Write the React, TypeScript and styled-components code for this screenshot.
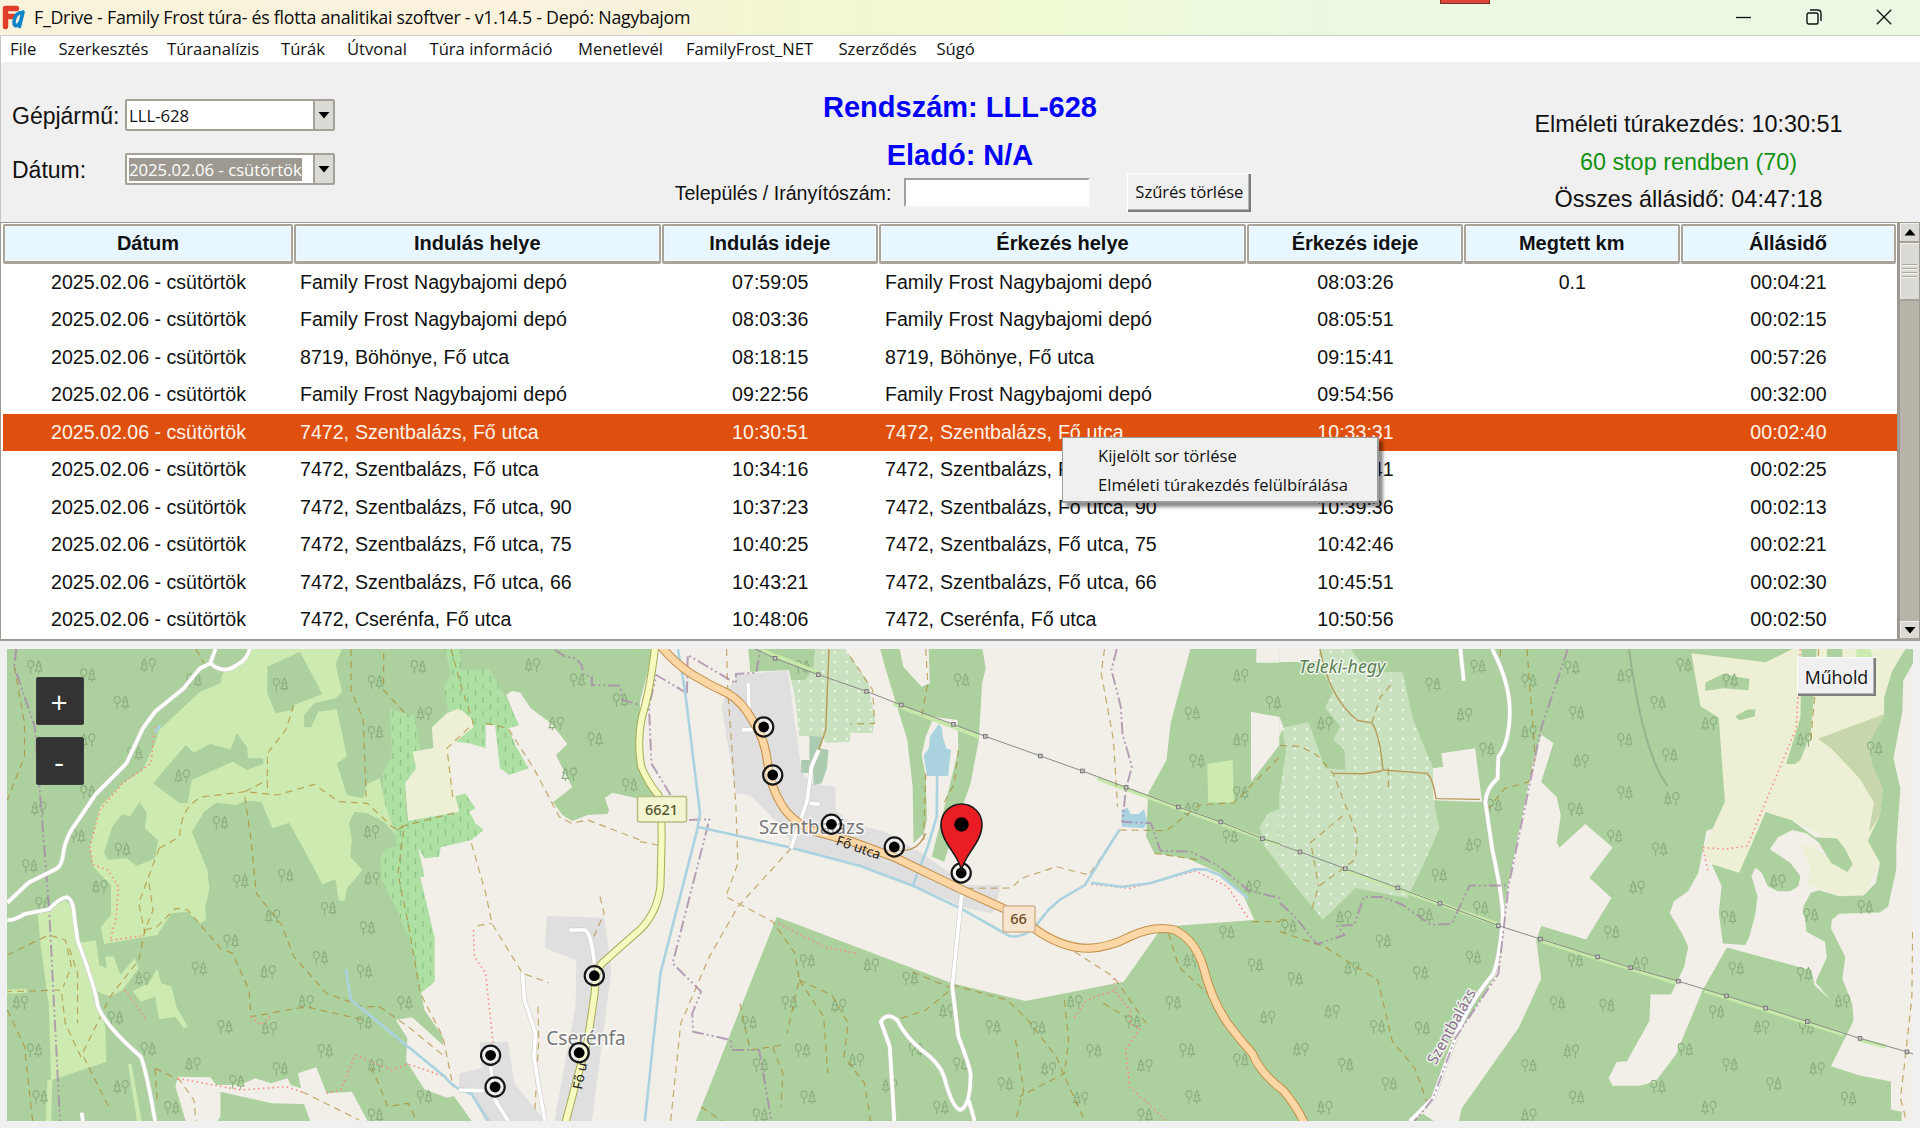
import React from "react";
import styled, { createGlobalStyle, css } from "styled-components";

const uiFont = `"Open Sans", "Noto Sans", sans-serif`;
const arial = `"Liberation Sans", Arial, sans-serif`;

const GlobalStyle = createGlobalStyle`
  *, *::before, *::after { box-sizing: border-box; }
  body { margin: 0; background: #f0f0f0; overflow: hidden; }
`;

/* ---------- window chrome ---------- */

const Window = styled.div`
  width: 1920px;
  height: 1128px;
  display: flex;
  flex-direction: column;
  background: #f0f0f0;
  color: #111;
  font-family: ${arial};
  overflow: hidden;
`;

const TitleBar = styled.header`
  position: relative;
  height: 36px;
  flex: none;
  display: flex;
  align-items: center;
  padding-left: 2px;
  background: linear-gradient(90deg, #f8f3da 0%, #faf2dd 25%, #f8f2dc 32%, #f4f6d2 40%, #effad5 55%, #ebf8e2 70%, #ebf8e3 100%);
  border-bottom: 1px solid #cdd0c8;
`;

const TitleText = styled.h1`
  flex: 1;
  margin: 0 0 0 8px;
  font: 400 17.8px/33px ${uiFont};
  letter-spacing: -0.25px;
  color: #0c0c0c;
  white-space: nowrap;
`;

const RecordingTab = styled.div`
  position: absolute;
  top: 0;
  left: 1440px;
  width: 50px;
  height: 4px;
  background: #d9473a;
  border: 1px solid #7c2c22;
  border-top: 0;
`;

const WindowButtons = styled.div`
  display: flex;
  gap: 54px;
  align-items: center;
  padding: 0 28px 2px 0;
  height: 34px;
`;

const MenuBar = styled.nav`
  height: 26px;
  flex: none;
  display: flex;
  align-items: center;
  background: #fff;
  border-left: 1px solid #c4c4c4;
  padding-left: 9px;
`;

const MenuItem = styled.span<{ $width: number }>`
  width: ${(p) => p.$width}px;
  font: 400 16.6px/26px ${uiFont};
  white-space: nowrap;
`;

/* ---------- filter panel ---------- */

const Panel = styled.section`
  height: 160px;
  flex: none;
  display: grid;
  grid-template-columns: 550px 820px 550px;
  border-left: 1px solid #c9c9c9;
`;

const Fields = styled.div`
  display: flex;
  flex-direction: column;
  gap: 22px;
  padding: 37px 0 0 11px;
`;

const Field = styled.label`
  display: grid;
  grid-template-columns: 113px 210px;
  align-items: center;
  height: 32px;
  white-space: nowrap;
`;

const FieldName = styled.span`
  font-size: 23px;
  padding-top: 2px;
`;

const Combo = styled.span`
  display: flex;
  height: 32px;
  border: 2px solid #a5a196;
  border-radius: 2px;
  background: #fff;
`;

const ComboValue = styled.span`
  flex: 1;
  display: flex;
  align-items: center;
  padding-left: 2px;
  font: 400 16.7px/23px ${uiFont};
`;

const Selected = styled.span`
  background: #9e9a91;
  color: #fff;
  width: 173px;
`;

const ComboButton = styled.span`
  width: 20px;
  display: grid;
  place-items: center;
  background: #dcdad5;
  border-left: 2px solid #a5a196;
`;

const Centre = styled.div`
  display: flex;
  flex-direction: column;
  align-items: center;
  padding-top: 28px;
`;

const Heading = styled.h2`
  margin: 0 2px 13.5px 0;
  font: 700 29px/34px ${arial};
  color: #0000fb;
  & + & { margin-bottom: 1px; }
`;

const SearchRow = styled.div`
  display: flex;
  align-items: center;
  height: 40px;
  margin-left: 4px;
`;

const SearchLabel = styled.label`
  font-size: 19.6px;
  padding-top: 2px;
`;

const SearchInput = styled.input`
  width: 186px;
  height: 29px;
  margin: 0 37px 0 13px;
  background: #fff;
  border: 2px solid;
  border-color: #a0a0a0 #fafafa #fafafa #a0a0a0;
  padding: 0;
`;

const RaisedButton = styled.button`
  height: 39px;
  border: 0;
  padding: 0 8px 1px;
  background: #f0f0f0;
  box-shadow: inset 1px 1px 0 #fff, inset -2px -2px 0 #7c7c7c, inset -3px -3px 0 #b4b4b4;
  font: 400 16.7px/22px ${uiFont};
  letter-spacing: -0.1px;
  color: #111;
  white-space: nowrap;
`;

const Summary = styled.div`
  display: flex;
  flex-direction: column;
  align-items: center;
  padding: 44px 0 0 85px;
`;

const SummaryLine = styled.div<{ $ok?: boolean }>`
  font-size: 23.4px;
  line-height: 37.5px;
  color: ${(p) => (p.$ok ? "#129312" : "#111")};
`;

/* ---------- trip table ---------- */

const TableFrame = styled.section`
  position: relative;
  height: 419px;
  flex: none;
  display: grid;
  grid-template-columns: 1899px 21px;
`;

const Table = styled.div`
  display: flex;
  flex-direction: column;
  background: #fff;
  border: solid #9e9a91;
  border-width: 1px 2px 2px 1px;
  padding: 1px 0 0 2px;
`;

const columns = css`
  display: grid;
  grid-template-columns: 291px 367.5px 217.5px 368px 217px 216.5px 216px;
`;

const HeaderRow = styled.div`
  ${columns}
  height: 39.5px;
`;

const HeaderCell = styled.div`
  display: grid;
  place-items: center;
  margin-right: 1px;
  padding-top: 1px;
  background: #e8f6ff;
  border: 2px solid #a8a49a;
  border-width: 2px 2px 3px;
  border-radius: 2px;
  box-shadow: inset 0 0 0 1px #f3f8fb;
  font-weight: 700;
  font-size: 20px;
`;

const Row = styled.div<{ $active?: boolean }>`
  ${columns}
  height: 37.5px;
  align-items: center;
  background: ${(p) => (p.$active ? "#df500f" : "#fff")};
  color: ${(p) => (p.$active ? "#fff3ea" : "#111")};
  font-size: 19.6px;
`;

const Cell = styled.div<{ $left?: boolean }>`
  text-align: ${(p) => (p.$left ? "left" : "center")};
  padding-left: ${(p) => (p.$left ? 6 : 0)}px;
  word-spacing: ${(p) => (p.$left ? 0.4 : 0)}px;
  white-space: nowrap;
`;

const ScrollBar = styled.div`
  display: flex;
  flex-direction: column;
  background: #b8b4a9;
  border: solid #9e9a91;
  border-width: 1px;
`;

const ScrollPart = styled.div<{ $height: number; $push?: boolean }>`
  height: ${(p) => p.$height}px;
  margin-top: ${(p) => (p.$push ? "auto" : 0)};
  display: flex;
  flex-direction: column;
  gap: 2px;
  align-items: center;
  justify-content: center;
  background: #dcdad5;
  border-bottom: 2px solid #a5a196;
  box-shadow: inset 1px 1px 0 #f1f0ed;
`;

const Grip = styled.i`
  width: 15px;
  height: 2px;
  background: #aeaaa0;
  border-bottom: 1px solid #f4f3f0;
`;

const ContextMenu = styled.div`
  position: absolute;
  left: 1062px;
  top: 215px;
  width: 317px;
  height: 66px;
  padding: 4px 0 0 35px;
  background: #f0f0f0;
  border: 1px solid #9c9c9c;
  border-right-width: 2px;
  border-bottom-width: 2px;
  box-shadow: 4px 4px 3px rgba(0, 0, 0, 0.45);
`;

const ContextItem = styled.div`
  font: 400 16.6px/28.5px ${uiFont};
  white-space: nowrap;
`;

/* ---------- map ---------- */

const MapFrame = styled.section`
  position: relative;
  width: 1906px;
  height: 472px;
  margin: 8px 0 0 7px;
`;

const MapSvg = styled.svg`
  display: block;
`;

const ZoomStack = styled.div`
  position: absolute;
  left: 29px;
  top: 28px;
  display: flex;
  flex-direction: column;
  gap: 12px;
`;

const ZoomButton = styled.button`
  width: 48px;
  height: 48px;
  border: 1px solid #3d3d3d;
  border-radius: 2px;
  padding: 0 2px 0 0;
  background: #333;
  color: #fff;
  font: 400 30px/45px ${uiFont};
`;

const SatelliteButton = styled(RaisedButton)`
  position: absolute;
  left: 1790px;
  top: 8px;
  width: 79px;
  padding: 0;
  font-size: 17.8px;
`;

type AreaKind = "forest" | "land" | "meadow" | "heath" | "farm" | "homes" | "orchard" | "yard" | "water" | "scrub";
type LineKind = "track" | "path" | "border" | "stream" | "lane" | "dirt" | "ridge" | "power" | "clearing";

const areaFill: Record<AreaKind, string> = {
  forest: "#add19e",
  land: "#f2efe9",
  meadow: "#cdebb0",
  heath: "url(#heath)",
  farm: "#eef0d5",
  homes: "#e0dfdf",
  orchard: "url(#orchard)",
  yard: "#aacbaf",
  water: "#aad3df",
  scrub: "#c8d7ab",
};

const lineStyle: Record<LineKind, string> = {
  track: "stroke: #ac8327; stroke-width: 1.2; stroke-dasharray: 7 5; opacity: .65;",
  path: "stroke: #f58e80; stroke-width: 1.6; stroke-dasharray: 1.6 3.2;",
  border: "stroke: #a98bab; stroke-width: 2; stroke-dasharray: 12 3 2 3 2 3; opacity: .8;",
  stream: "stroke: #aad3df; stroke-width: 2.6;",
  lane: "stroke: #fff; stroke-width: 3.6;",
  dirt: "stroke: #b89a58; stroke-width: 1.4;",
  ridge: "stroke: #94b58f; stroke-width: 2;",
  power: "stroke: #8b8b8b; stroke-width: 1;",
  clearing: "stroke: #c6e8a8; stroke-width: 4;",
};

const Area = styled.polygon<{ $kind: AreaKind }>`
  fill: ${(p) => areaFill[p.$kind]};
`;

const Line = styled.path<{ $kind: LineKind }>`
  fill: none;
  stroke-linejoin: round;
  vector-effect: non-scaling-stroke;
  ${(p) => lineStyle[p.$kind]}
`;

const Road = styled.path<{ $color: string; $width: number }>`
  fill: none;
  stroke: ${(p) => p.$color};
  stroke-width: ${(p) => p.$width};
  stroke-linejoin: round;
  vector-effect: non-scaling-stroke;
`;

const MapLabel = styled.text<{ $size: number; $color: string; $italic?: boolean; $weight?: number }>`
  font-family: "Noto Sans", sans-serif;
  font-size: ${(p) => p.$size}px;
  font-style: ${(p) => (p.$italic ? "italic" : "normal")};
  font-weight: ${(p) => p.$weight ?? 400};
  fill: ${(p) => p.$color};
  stroke: rgba(255, 255, 255, 0.75);
  stroke-width: 3px;
  paint-order: stroke;
  stroke-linejoin: round;
  text-anchor: middle;
`;

const ShieldText = styled.text`
  font: 500 14.5px "Noto Sans", sans-serif;
  text-anchor: middle;
`;

interface Tile {
  x: number;
  y: number;
  sx: number;
  sy: number;
  areas: [AreaKind, string][];
  lines: [LineKind, string][];
  trees: string;
}

const SX = 1 / 2.45;
const SY = 1 / 3;
const SYE = 1 / 2.97;

const west: Tile = {
  x: 0, y: 640, sx: SX, sy: SY,
  areas: [
    ["forest", "0,0 1568,0 1568,1464 0,1464"],
    ["land", "1240,165 1255,152 1275,158 1300,205 1350,250 1390,312 1362,345 1402,442 1355,487 1378,525 1402,543 1440,525 1488,522 1492,510 1482,475 1500,458 1570,478 1570,1464 1168,1464 1112,1368 1095,1373 1040,1348 995,1262 998,1195 970,1140 1010,1132 1085,1215 1085,1190 1040,1110 1032,1060 1000,700 1000,540 993,430 1012,335 1090,318 1190,250 1215,255 1270,255"],
    ["heath", "1088,20 1128,20 1130,90 1200,88 1235,165 1272,255 1245,265 1265,320 1295,385 1248,405 1225,385 1213,255 1190,255 1190,325 1150,310 1115,305 1160,262 1155,235 1130,210 1098,215 1088,140 1105,100"],
    ["heath", "955,207 1015,228 1030,330 1012,335 1020,385 993,430 995,540 1125,515 1112,470 1140,460 1165,505 1150,515 1165,550 1185,570 1155,600 1080,622 1075,650 1040,655 1025,625 1040,710 1030,712 1065,895 1065,1025 1032,1058 1015,940 975,815 935,720 932,650 950,625 972,620 970,570 940,490 938,400 960,350"],
    ["farm", "1058,262 1095,220 1120,207 1130,210 1155,235 1160,262 1100,322 1110,440 1125,515 1000,542 993,430 1020,390 1012,335 1062,325"],
    ["meadow", "612,20 840,20 822,72 838,155 822,175 770,190 745,225 745,262 762,262 780,215 825,208 850,350 825,370 850,465 890,475 900,432 930,415 945,500 972,585 940,545 900,520 868,515 855,550 862,600 858,650 888,690 850,745 845,782 830,782 822,718 790,733 750,640 708,548 668,565 640,485 600,482 580,495 530,488 500,515 470,575 508,690 513,750 503,800 505,840 490,850 460,815 420,820 385,885 255,912 247,860 272,825 272,735 228,680 220,620 245,500 300,430 350,390 380,310 390,270 490,155 540,130 545,100 600,60"],
    ["forest", "655,80 735,35 790,162 720,195 718,210 675,220 655,160"],
    ["forest", "375,430 455,315 475,338 515,312 565,328 580,280 605,320 608,355 645,355 645,372 605,390 570,365 470,420 460,490 440,490"],
    ["forest", "255,640 275,560 300,522 318,530 342,485 360,520 355,565 387,600 380,655 335,678 310,655 265,660"],
    ["meadow", "92,822 120,805 160,780 178,800 190,900 215,1000 240,1100 258,1160 260,1265 128,1320 125,1464 112,1464 116,1322 125,1318 120,1100 100,920"],
    ["meadow", "190,908 235,902 243,975 262,985 258,950 278,948 295,1005 330,955 340,985 300,1050 270,1070 240,1055 215,1010"],
    ["meadow", "325,1053 365,1030 385,985 395,1030 420,1040 432,1100 460,1160 450,1165 430,1130 390,1138 380,1070 345,1085"],
    ["meadow", "314,1272 322,1272 350,1464 338,1464"],
    ["meadow", "0,1050 66,1046 66,1058 0,1062"],
    ["land", "435,1310 515,1312 530,1335 590,1335 625,1315 665,1330 705,1315 712,1335 738,1345 730,1300 775,1282 800,1360 862,1355 910,1464 766,1464 745,1392 665,1390 540,1355 540,1430 520,1464 460,1464 430,1340"],
    ["homes", "1340,828 1480,833 1498,990 1448,1464 1355,1464 1410,1100 1412,960 1335,925"],
    ["homes", "1175,1207 1245,1205 1260,1330 1335,1443 1197,1464 1155,1362 1125,1345 1125,1300 1180,1285"],
  ],
  lines: [
    ["track", "M35,80 L60,250 60,350 18,480 M860,27 L860,150 890,240 897,470 M940,40 L940,150 1000,230 M720,195 L700,270 655,340 655,465 M390,625 L440,590 Q445,490 500,470 L600,455 680,465 770,433 830,485 900,490 965,565 1125,515 M600,455 L655,420"],
    ["track", "M600,470 L615,600 628,760 690,855 720,950 800,1060 890,1100 930,1100 1000,1160 1090,1250 M390,625 L355,740 340,790 355,880 M355,870 L385,860 430,805 460,810 540,925 570,940 610,1050 615,1130 750,1100 890,1140"],
    ["track", "M365,730 L375,810 355,870 340,960 270,1070 198,1250 160,1150 150,1050 18,1055 M18,945 L120,885 160,900 175,980 155,1040 M170,925 L190,1000 190,1150 M480,27 L500,70"],
    ["track", "M972,570 L990,560 975,700 1000,850 1030,1060 1085,1190 1110,1340 M1105,27 L1130,140 1160,250 1095,325 1110,480 M1190,250 L1245,265 1310,390 1370,530 1400,550 1440,540 1568,600 M1155,610 L1190,760 1205,850 1280,1000 1345,1028 M1170,857 L1205,850"],
    ["track", "M1318,1100 L1320,1200 1310,1420 M1470,770 L1480,820 1455,890 M380,1285 L440,1320 475,1380 480,1443 M740,1355 L880,1440 M18,1110 L60,1220 80,1443 M380,1285 L385,1380 M910,1280 L950,1400 1000,1390 1020,1440 M205,1250 L270,1410"],
    ["path", "M380,260 L370,370 300,430 245,510 220,620 228,675 265,690 290,740 285,830 270,902 345,888 M1160,870 L1162,950 1190,1000 1208,1210 M435,1315 L590,1350 700,1340 745,1358 M800,1360 L835,1350 870,1245 960,1290 1000,1272 1090,1310 M305,1050 L360,1140 M615,1130 L640,1155 665,1125"],
    ["border", "M40,27 L35,80 85,260 120,800 147,1443 M1360,30 L1385,50 1410,55 1425,75 1430,105 1450,110 1450,135 1520,137 1525,180 1568,195"],
    ["stream", "M847,988 L860,1080 1090,1310 Q1110,1345 1155,1362 L1197,1443 M392,255 L380,278"],
    ["lane", "M18,788 L70,728 140,685 Q152,675 155,640 Q160,600 175,570 L235,462 310,370 350,265 380,215 450,145 490,85 515,70 528,27 M515,70 Q550,105 580,75 Q605,60 612,27"],
    ["lane", "M18,840 Q35,842 60,822 L120,808 Q150,770 165,772 Q180,780 182,830 L190,900 Q235,1050 240,1100 Q260,1160 345,1250 Q360,1300 380,1443 M200,1418 L204,1450"],
    ["lane", "M1280,1000 L1285,1080 1312,1180 1308,1250 1320,1340 1335,1443 M1125,1350 L1185,1352 M1202,1280 L1213,1380 1245,1443 M1395,870 L1435,870 Q1450,890 1456,970"],
  ],
  trees: "85,80 215,105 363,75 475,120 297,187 215,300 330,340 215,455 95,505 190,588 73,678 245,740 105,790 687,133 447,408 300,628 540,548 910,575 590,723 700,706 668,828 805,805 900,863 912,715 566,903 785,953 657,996 488,985 893,994 750,1085 992,1088 551,1160 660,1165 797,1232 893,1148 350,1015 283,1133 363,1227 473,1272 687,1286 580,1325 920,1276 920,1425 1040,1370 297,1340 98,1370 84,1230 50,1087 421,1403 1025,80 1305,75 920,125 1415,120 1040,220 920,277 1520,180 1363,250 1458,297 1543,435 1395,402",
};

const centre: Tile = {
  x: 640, y: 640, sx: SX, sy: SY,
  areas: [
    ["land", "0,0 1568,0 1568,1464 0,1464"],
    ["forest", "-1,20 30,20 18,100 -1,190"],
    ["forest", "-1,385 12,410 48,468 -1,470"],
    ["homes", "215,150 240,105 362,90 395,390 415,430 478,440 480,510 520,550 600,575 690,640 760,700 800,735 885,735 865,820 800,805 670,735 540,680 380,625 345,560 270,465 235,460 200,200"],
    ["forest", "265,20 430,20 425,90 405,120 370,120 365,90 270,95"],
    ["orchard", "430,20 500,20 560,130 575,240 570,280 515,278 515,305 455,308 445,290 390,288 380,170 370,120 405,120 425,90"],
    ["yard", "415,288 448,290 440,325 462,330 458,385 445,430 425,435 425,400 395,398 395,360 415,360"],
    ["forest", "587,20 635,20 645,80 690,140 710,130 707,20 838,20 847,85 838,130 830,300 810,430 770,570 745,665 715,650 750,480 780,330 778,240 720,230 700,290 690,345 700,410 703,540 695,580 670,610 668,440 655,300 600,80"],
    ["water", "732,252 740,265 742,290 750,325 762,330 755,408 703,408 695,345 708,325 710,290"],
    ["forest", "1350,20 1570,20 1570,1464 130,1464 335,830 765,1030 945,1083 1185,1025 1280,860 1505,840 1480,770 1420,700 1340,655 1260,640 1240,590 1245,460 1290,360 1300,250"],
    ["land", "1510,20 1570,20 1570,68 1510,68"],
    ["land", "1497,215 1570,232 1570,310 1497,425"],
    ["meadow", "1390,372 1452,360 1455,488 1392,487"],
    ["orchard", "1570,505 1540,520 1518,560 1530,620 1570,680"],
    ["water", "1180,510 1195,503 1202,522 1222,522 1235,508 1243,545 1235,565 1180,560"],
  ],
  lines: [
    ["clearing", "M290,27 L437,98 M620,192 L830,290 M1120,415 L1568,615"],
    ["track", "M212,27 L215,150 235,500 240,670 210,770 325,845 380,940 390,1020 360,1180 M370,625 L240,800 170,950 100,1150 75,1443 M700,27 L705,130 690,230 M700,400 L695,600 M780,330 L770,430 740,500 M515,50 L570,150 575,250 515,252"],
    ["track", "M800,745 L910,744 935,715 1020,680 1100,705 1175,570 M1138,27 L1130,100 1160,300 1170,500 M1175,570 L1290,572 1370,495 1455,488 1568,350 M640,1135 L700,1110 765,1045 665,995 M765,1035 L900,1080 950,1140 1020,1250 1040,1310 1090,1443 M1260,640 L1370,660 M1500,845 L1568,845"],
    ["track", "M390,1020 L470,1065 510,1150 500,1250 550,1330 565,1443 M390,1020 L450,1130 460,1300 M245,1090 L270,1230 350,1215 M325,1220 L350,1300 345,1400 M1065,935 L1160,1010 1240,1150 M1295,880 L1320,980 1390,1060 M1040,1080 L1050,1200 1040,1300 930,1370 M920,1200 L940,1350 920,1443 M1135,1090 L1190,1130 M150,1400 L200,1443 M0,605 L45,615"],
    ["path", "M340,850 L450,920 530,940 M1105,733 L1200,745 1360,693 1440,740 1490,835 M1160,1015 L1165,1050 1095,1080 1060,1140 M1165,1055 L1200,1110 1200,1150 1225,1165 1190,1230 1200,1340 1290,1443"],
    ["border", "M115,160 L40,105 22,200 28,370 75,465 M115,160 L117,45 235,130 235,102 285,98 295,27 M120,540 L170,538 80,970 150,1055 128,1120 130,1175 222,1200 225,1230 292,1230 322,1443 M1168,27 L1155,90 1178,200 1182,280 1205,380 1190,450 1182,545 1252,550 1275,632 1350,635 1420,680 1490,750 1568,775"],
    ["stream", "M93,27 L110,150 147,520 140,570 50,1000 12,1443 M140,560 L360,620 540,678 670,738 790,808 905,888 Q935,895 965,865 L1000,810 1030,778 1090,735 1175,568 M728,408 L727,530 705,620 668,738 M1105,728 L1180,740 1250,730 1360,688 1385,688 1420,705 1490,775"],
    ["dirt", "M463,27 L458,180 455,270 438,330 M630,630 Q680,640 700,580"],
    ["lane", "M265,130 L268,225 300,260 M438,330 L420,380 410,480 385,570 370,625 M788,765 L765,1040 780,1190 Q812,1290 810,1310 Q808,1400 785,1410 Q765,1405 745,1310 Q735,1270 690,1230 Q650,1190 630,1140 Q605,1115 590,1145 L612,1220 623,1443 M805,1380 L820,1443 M250,270 L280,268 M415,490 L440,492"],
    ["power", "M270,20 L331,55 437,104 555,154 640,195 768,253 846,289 981,348 1084,393 1191,442 1319,501 1423,546 1525,596 1568,612"],
  ],
  trees: "398,80 788,120 1472,107 1552,188 1353,220 1472,300 1365,362 1472,458 1352,507 1446,590 410,962 567,975 662,1015 366,1088 487,1097 267,1147 398,1230 530,1260 295,1275 412,1371 612,1337 737,1402 295,1425 752,1113 865,1160 975,1163 1065,1085 786,1272 895,1332 1001,1286 1112,1232 1208,1145 1237,1277 1340,1230 1307,1088 1350,962 1438,877 1508,975 1538,1132 1472,1260 1355,1370 1080,1375 1237,1425 677,1228 1502,740",
};

const east: Tile = {
  x: 1280, y: 600, sx: SX, sy: SYE,
  areas: [
    ["forest", "-2,100 1570,100 1570,1568 -2,1568"],
    ["land", "-2,140 95,140 98,182 -2,185"],
    ["land", "-2,345 8,375 -2,410"],
    ["orchard", "95,140 170,140 215,215 300,213 325,350 375,500 378,600 390,680 350,790 312,885 185,855 105,950 -2,790 -2,580 15,450 5,380 70,362 110,500 160,505 158,445 130,415 148,375 110,320 130,275 100,200"],
    ["land", "395,455 478,440 495,600 375,595 375,500 400,495"],
    ["land", "640,400 670,425 640,540 678,585 688,640 678,720 685,735 748,665 815,735 758,825 812,885 750,1008 640,968 628,1010 640,1125 585,1270 445,1510 435,1568 400,1568 350,1525 300,1568 375,1480 435,1290 490,1190 530,1110 545,950 560,840 600,600 620,480"],
    ["land", "1025,810 1045,685 1190,630 1450,250 1500,140 1570,140 1570,1568 1523,1568 1523,1520 1497,1513 1497,1430 1420,1412 1350,1385 1405,1250 1310,1145 1302,1100 1095,1032 1035,1160 970,1350 920,1430 880,1443 815,1443 805,1420 825,1372 850,1370 905,1250 908,1172 958,1172 990,1090 1000,1030 985,990 955,930 965,895 1000,865"],
    ["farm", "1008,158 1190,185 1265,140 1535,140 1500,340 1470,700 1470,780 1430,880 1370,880 1290,845 1300,800 1275,720 1310,735 1340,760 1330,700 1280,670 1190,630 1125,810 1058,785 1035,745 1090,600 1075,350 1030,315"],
    ["scrub", "1483,338 1445,430 1450,490 1477,560 1470,640 1443,690 1455,600 1420,530 1350,440 1318,412"],
    ["forest", "1535,140 1570,140 1550,190 1527,240 1525,330 1503,470 1520,560 1510,730 1510,800 1490,910 1470,928 1370,932 1352,950 1350,975 1385,1060 1378,1125 1402,1200 1405,1245 1385,1300 1365,1270 1350,1190 1312,1135 1340,1060 1335,1015 1290,985 1282,910 1300,870 1320,862 1370,880 1430,878 1460,840 1470,780 1440,715 1450,690 1470,640 1477,560 1450,490 1445,420 1480,345 1480,290 1500,210"],
    ["forest", "1190,630 1255,655 1310,705 1365,708 1385,740 1403,785 1390,808 1350,780 1320,720 1290,693 1255,683 1220,705 1200,740 1250,780 1275,820 1270,850 1250,865 1220,865 1195,850 1180,810 1165,795 1155,820 1170,880 1165,930 1150,1000 1140,1025 1085,1020 1075,930 1082,850 1058,785 1125,810"],
    ["forest", "1278,140 1315,140 1308,290 1300,400 1275,475 1262,487 1240,487 1275,350"],
    ["forest", "1340,140 1378,140 1378,175 1340,175"],
    ["meadow", "1412,140 1445,140 1452,170 1412,170"],
    ["forest", "1042,245 1085,220 1150,235 1148,268 1085,262 1042,270"],
    ["forest", "1115,345 1145,325 1165,325 1163,345 1125,358"],
  ],
  lines: [
    ["clearing", "M160,803 L545,968 M640,1012 L970,1137 M1040,1160 L1380,1290 M1420,1306 L1485,1326"],
    ["track", "M0,432 L50,435 90,460 130,515 190,700 185,770 95,850 75,930 M155,640 L75,720 95,850 M225,365 L245,290 280,240 M605,146 L620,380 625,470 610,540 550,560 510,620 M540,146 L540,190 M0,985 L110,1030 240,1130 275,1310 330,1390 360,1490"],
    ["track", "M1320,146 L1310,290 1300,420 M1550,985 L1548,1180 1530,1380 1520,1480 1535,1548 M265,500 L266,560 M0,950 L20,950"],
    ["path", "M1275,146 L1265,380 1145,730 1090,740 1035,735 1050,810"],
    ["ridge", "M855,146 Q890,460 950,552"],
    ["dirt", "M98,146 Q120,290 190,358 L225,365 Q245,400 252,505 L360,515 Q375,530 382,590 L490,592 M250,508 L205,516 130,515"],
    ["lane", "M520,146 Q565,250 563,340 Q560,430 535,465 L533,530 Q505,560 503,600 L520,740 Q545,880 546,940 Q540,1050 523,1110 Q460,1200 430,1300 L375,1480 318,1548 M442,146 L450,240"],
    ["border", "M705,146 L640,380 560,850 535,1110 430,1300 375,1480 330,1548 M0,900 L40,945 90,1022 158,995 140,968 182,965 205,882 250,882 300,905 370,965 420,962 465,848 558,848"],
    ["power", "M0,727 L49,748 160,798 289,855 392,901 535,967 638,1007 778,1060 859,1092 976,1132 1094,1176 1190,1212 1292,1252 1421,1302 1536,1342 1560,1352"],
  ],
  trees: "485,197 375,250 452,340 507,443 610,240 610,392 715,200 727,335 845,225 845,415 926,305 738,478 955,460 845,572 960,590 724,621 820,702 474,728 390,817 930,740 875,853 492,914 356,935 157,942 253,1013 474,1062 176,1094 37,1125 345,1107 128,1222 239,1267 349,1272 51,1335 161,1380 268,1437 110,1507 813,987 724,1071 883,1080 680,1197 801,1205 714,1340 610,1383 727,1477 610,1530 1118,1094 1070,1223 1180,1268 1290,1270 1103,1380 1316,1392 1210,1437 1393,1480 1051,1507 926,1445 993,1335 1378,1192 1285,1110 1099,942 1220,835 1300,935 1434,911 1052,367 1103,238 990,193 1285,415 1457,440 22,970 110,367 525,610",
};

const tiles = [west, centre, east];

const pylons: [Tile, string][] = [
  [centre, "331,55 437,104 555,154 640,195 768,253 846,289 981,348 1084,393 1191,442 1319,501 1423,546 1525,596"],
  [east, "49,748 160,798 289,855 392,901 535,967 638,1007 778,1060 859,1092 976,1132 1094,1176 1190,1212 1292,1252 1421,1302 1536,1342"],
];

const yellowRoad =
  "M37,20 Q25,150 5,230 Q-8,300 3,380 Q20,430 45,465 Q53,500 53,600 L50,740 Q40,830 -10,880 L-93,970 Q-110,990 -111,1060 L-128,1200 -153,1310 -183,1450";
const orangeRoad =
  "M52,20 Q90,75 130,105 T215,160 Q250,185 275,240 Q305,290 313,370 Q320,440 345,490 Q370,545 430,575 L520,605 620,650 790,750 890,805 960,860 Q1030,925 1100,925 Q1150,922 1200,890 Q1260,855 1310,870 Q1360,900 1380,980 Q1400,1080 1440,1150 Q1470,1200 1500,1240 Q1520,1300 1575,1350 Q1610,1400 1632,1460";

const stops: [number, number][] = [
  [763.7, 727], [772.7, 775], [831.4, 824.3], [894.3, 847], [961.2, 873],
  [594.3, 975.7], [579.2, 1052.7], [490.6, 1055.3], [495.1, 1087],
];

const project = (tile: Tile, list: string) =>
  list.split(" ").map((pair) => {
    const [x, y] = pair.split(",").map(Number);
    return [tile.x + x * tile.sx, tile.y + y * tile.sy];
  });

const transformOf = (t: Tile) => `translate(${t.x} ${t.y}) scale(${t.sx} ${t.sy})`;

function TourMap() {
  return (
    <MapSvg width="1906" height="472" viewBox="7 649 1906 472">
      <defs>
        <pattern id="heath" width="15" height="14" patternUnits="userSpaceOnUse" patternTransform="scale(2.45 3)">
          <rect width="15" height="14" fill="#aedfa3" />
          <path d="M3 1v6M10.5 8v6" stroke="#8cc587" strokeWidth="1.2" />
        </pattern>
        <pattern id="orchard" width="12" height="9.6" patternUnits="userSpaceOnUse" patternTransform="scale(2.45 3)">
          <rect width="12" height="9.6" fill="#c9e1bf" />
          <circle cx="3" cy="3" r="1.2" fill="#eef6ea" />
        </pattern>
        <g id="trees" fill="none" stroke="#8db081" strokeWidth="1.2">
          <ellipse cx="-4" cy="-2.5" rx="3" ry="3.6" />
          <path d="M-4 1.2V7M4 4.5V7M4-6L1.6-1H3L.8 4.3H7.2L5-1H6.4Z" />
        </g>
        <g id="treesFlipped"><use href="#trees" transform="scale(-1 1)" /></g>
      </defs>
      {tiles.map((t) => (
        <g key={t.x} transform={transformOf(t)}>
          {t.areas.map(([kind, points], i) => <Area key={i} $kind={kind} points={points} />)}
        </g>
      ))}
      {tiles.map((t) =>
        project(t, t.trees).map(([x, y], i) => (
          <use key={`${t.x}-${i}`} href={i % 3 === 2 ? "#treesFlipped" : "#trees"} x={x} y={y} />
        ))
      )}
      {tiles.map((t) => (
        <g key={t.x} transform={transformOf(t)}>
          {t.lines.map(([kind, d], i) => (
            <React.Fragment key={i}>
              {kind === "lane" && <Road $color="#cfcdc8" $width={4.8} d={d} />}
              <Line $kind={kind} d={d} />
            </React.Fragment>
          ))}
        </g>
      ))}
      <g transform={transformOf(centre)}>
        <Road $color="#a5ab57" $width={8} d={yellowRoad} />
        <Road $color="#f7fabf" $width={6} d={yellowRoad} />
        <Road $color="#c18f4a" $width={9} d={orangeRoad} />
        <Road $color="#fcd6a4" $width={7} d={orangeRoad} />
      </g>
      {pylons.map(([t, list]) =>
        project(t, list).map(([x, y], i) => (
          <rect key={`${t.x}-${i}`} x={x - 1.8} y={y - 1.8} width="3.6" height="3.6" fill="#c9c9c4" stroke="#777" strokeWidth="1" />
        ))
      )}

      <rect x="637.5" y="796.5" width="49" height="25.5" rx="2" fill="#f3f5d0" stroke="#b9bd84" strokeWidth="1.5" />
      <ShieldText x="661.5" y="814.5" fill="#53562c">6621</ShieldText>
      <rect x="1003" y="906" width="32" height="26" rx="2" fill="#f8e5cf" stroke="#d3b48f" strokeWidth="1.5" />
      <ShieldText x="1018.5" y="924" fill="#6b4e2a">66</ShieldText>

      <MapLabel $size={19.2} $color="#777" x="811.5" y="833.5">Szentbalázs</MapLabel>
      <MapLabel $size={19.2} $color="#777" x="586" y="1044.5">Cserénfa</MapLabel>
      <MapLabel $size={17.8} $color="#5c8253" $italic x="1342" y="672.5">Teleki-hegy</MapLabel>
      <MapLabel $size={15.2} $color="#8d6b90" transform="translate(1456 1029) rotate(-61)">Szentbalázs</MapLabel>
      <text transform="translate(857 852) rotate(19)" textAnchor="middle" fontFamily="Noto Sans, sans-serif" fontSize="13.5" fill="#222">Fő utca</text>
      <text transform="translate(582 1090) rotate(-79)" fontFamily="Noto Sans, sans-serif" fontSize="13.5" fill="#222">Fő u</text>

      {stops.map(([x, y]) => (
        <g key={`${x}`}>
          <circle cx={x} cy={y} r="9.6" fill="rgba(255,255,255,.4)" stroke="#161616" strokeWidth="2.2" />
          <circle cx={x} cy={y} r="5.4" fill="#000" />
        </g>
      ))}
      <path
        d="M961.5 871C960 856 941 843 941 824.5A20.5 20.5 0 0 1 982 824.5C982 843 963 856 961.5 871Z"
        fill="#ea1c24" stroke="#1a1a1a" strokeWidth="1.6"
      />
      <circle cx="961.5" cy="824.5" r="7.2" fill="#000" />
    </MapSvg>
  );
}

/* ---------- data ---------- */

const menu: [string, number][] = [
  ["File", 48.5], ["Szerkesztés", 108.5], ["Túraanalízis", 114], ["Túrák", 66], ["Útvonal", 82.5],
  ["Túra információ", 148.5], ["Menetlevél", 108], ["FamilyFrost_NET", 152.5], ["Szerződés", 98], ["Súgó", 60],
];

const headers = ["Dátum", "Indulás helye", "Indulás ideje", "Érkezés helye", "Érkezés ideje", "Megtett km", "Állásidő"];

const depot = "Family Frost Nagybajomi depó";
const street = "7472, Szentbalázs, Fő utca";
const trips: [string, string, string, string, string][] = [
  [depot, "07:59:05", "08:03:26", "0.1", "00:04:21"],
  [depot, "08:03:36", "08:05:51", "", "00:02:15"],
  ["8719, Böhönye, Fő utca", "08:18:15", "09:15:41", "", "00:57:26"],
  [depot, "09:22:56", "09:54:56", "", "00:32:00"],
  [street, "10:30:51", "10:33:31", "", "00:02:40"],
  [street, "10:34:16", "10:36:41", "", "00:02:25"],
  [`${street}, 90`, "10:37:23", "10:39:36", "", "00:02:13"],
  [`${street}, 75`, "10:40:25", "10:42:46", "", "00:02:21"],
  [`${street}, 66`, "10:43:21", "10:45:51", "", "00:02:30"],
  ["7472, Cserénfa, Fő utca", "10:48:06", "10:50:56", "", "00:02:50"],
];

const Caret = ({ up }: { up?: boolean }) => (
  <svg width="12" height="8" viewBox="0 0 12 8">
    <path d={up ? "M6 1L11.5 7.5H.5Z" : "M6 7.5L11.5 1H.5Z"} fill="#000" />
  </svg>
);

export default function App() {
  return (
    <Window>
      <GlobalStyle />
      <TitleBar>
        <svg width="24" height="25" viewBox="0 0 24 25" fill="none" strokeLinecap="round" strokeLinejoin="round">
          <path d="M3.5 21.5V3.5H14.5M4 11.5H12" stroke="#e23d28" strokeWidth="5.4" />
          <path d="M20.5 7.5C15 7 12 12.5 12 17.5C12 23 17 20.5 18.5 16L21 7L17.5 21.5" stroke="#0f86c9" strokeWidth="3.6" />
        </svg>
        <TitleText>F_Drive - Family Frost túra- és flotta analitikai szoftver - v1.14.5 - Depó: Nagybajom</TitleText>
        <RecordingTab />
        <WindowButtons>
          <svg width="16" height="16" viewBox="0 0 16 16"><path d="M0 8.5H15" stroke="#111" strokeWidth="1.3" /></svg>
          <svg width="16" height="16" viewBox="0 0 16 16" fill="none" stroke="#111" strokeWidth="1.4">
            <rect x="1" y="4" width="11" height="11" rx="1.8" />
            <path d="M4 1H11.5Q15 1 15 4.5V12" />
          </svg>
          <svg width="16" height="16" viewBox="0 0 16 16"><path d="M.8 .8L15.2 15.2M15.2 .8L.8 15.2" stroke="#111" strokeWidth="1.3" /></svg>
        </WindowButtons>
      </TitleBar>

      <MenuBar>
        {menu.map(([label, width]) => <MenuItem key={label} $width={width}>{label}</MenuItem>)}
      </MenuBar>

      <Panel>
        <Fields>
          <Field>
            <FieldName>Gépjármű:</FieldName>
            <Combo><ComboValue>LLL-628</ComboValue><ComboButton><Caret /></ComboButton></Combo>
          </Field>
          <Field>
            <FieldName>Dátum:</FieldName>
            <Combo>
              <ComboValue><Selected>2025.02.06 - csütörtök</Selected></ComboValue>
              <ComboButton><Caret /></ComboButton>
            </Combo>
          </Field>
        </Fields>
        <Centre>
          <Heading>Rendszám: LLL-628</Heading>
          <Heading>Eladó: N/A</Heading>
          <SearchRow>
            <SearchLabel>Település / Irányítószám:</SearchLabel>
            <SearchInput />
            <RaisedButton>Szűrés törlése</RaisedButton>
          </SearchRow>
        </Centre>
        <Summary>
          <SummaryLine>Elméleti túrakezdés: 10:30:51</SummaryLine>
          <SummaryLine $ok>60 stop rendben (70)</SummaryLine>
          <SummaryLine>Összes állásidő: 04:47:18</SummaryLine>
        </Summary>
      </Panel>

      <TableFrame>
        <Table>
          <HeaderRow>{headers.map((h) => <HeaderCell key={h}>{h}</HeaderCell>)}</HeaderRow>
          {trips.map(([place, start, end, km, idle], i) => (
            <Row key={start} $active={i === 4}>
              <Cell>2025.02.06 - csütörtök</Cell>
              <Cell $left>{place}</Cell>
              <Cell>{start}</Cell>
              <Cell $left>{place}</Cell>
              <Cell>{end}</Cell>
              <Cell>{km}</Cell>
              <Cell>{idle}</Cell>
            </Row>
          ))}
        </Table>
        <ScrollBar>
          <ScrollPart $height={20}><Caret up /></ScrollPart>
          <ScrollPart $height={58}><Grip /><Grip /><Grip /><Grip /></ScrollPart>
          <ScrollPart $height={19} $push><Caret /></ScrollPart>
        </ScrollBar>
        <ContextMenu>
          <ContextItem>Kijelölt sor törlése</ContextItem>
          <ContextItem>Elméleti túrakezdés felülbírálása</ContextItem>
        </ContextMenu>
      </TableFrame>

      <MapFrame>
        <TourMap />
        <ZoomStack>
          <ZoomButton>+</ZoomButton>
          <ZoomButton>-</ZoomButton>
        </ZoomStack>
        <SatelliteButton>Műhold</SatelliteButton>
      </MapFrame>
    </Window>
  );
}
